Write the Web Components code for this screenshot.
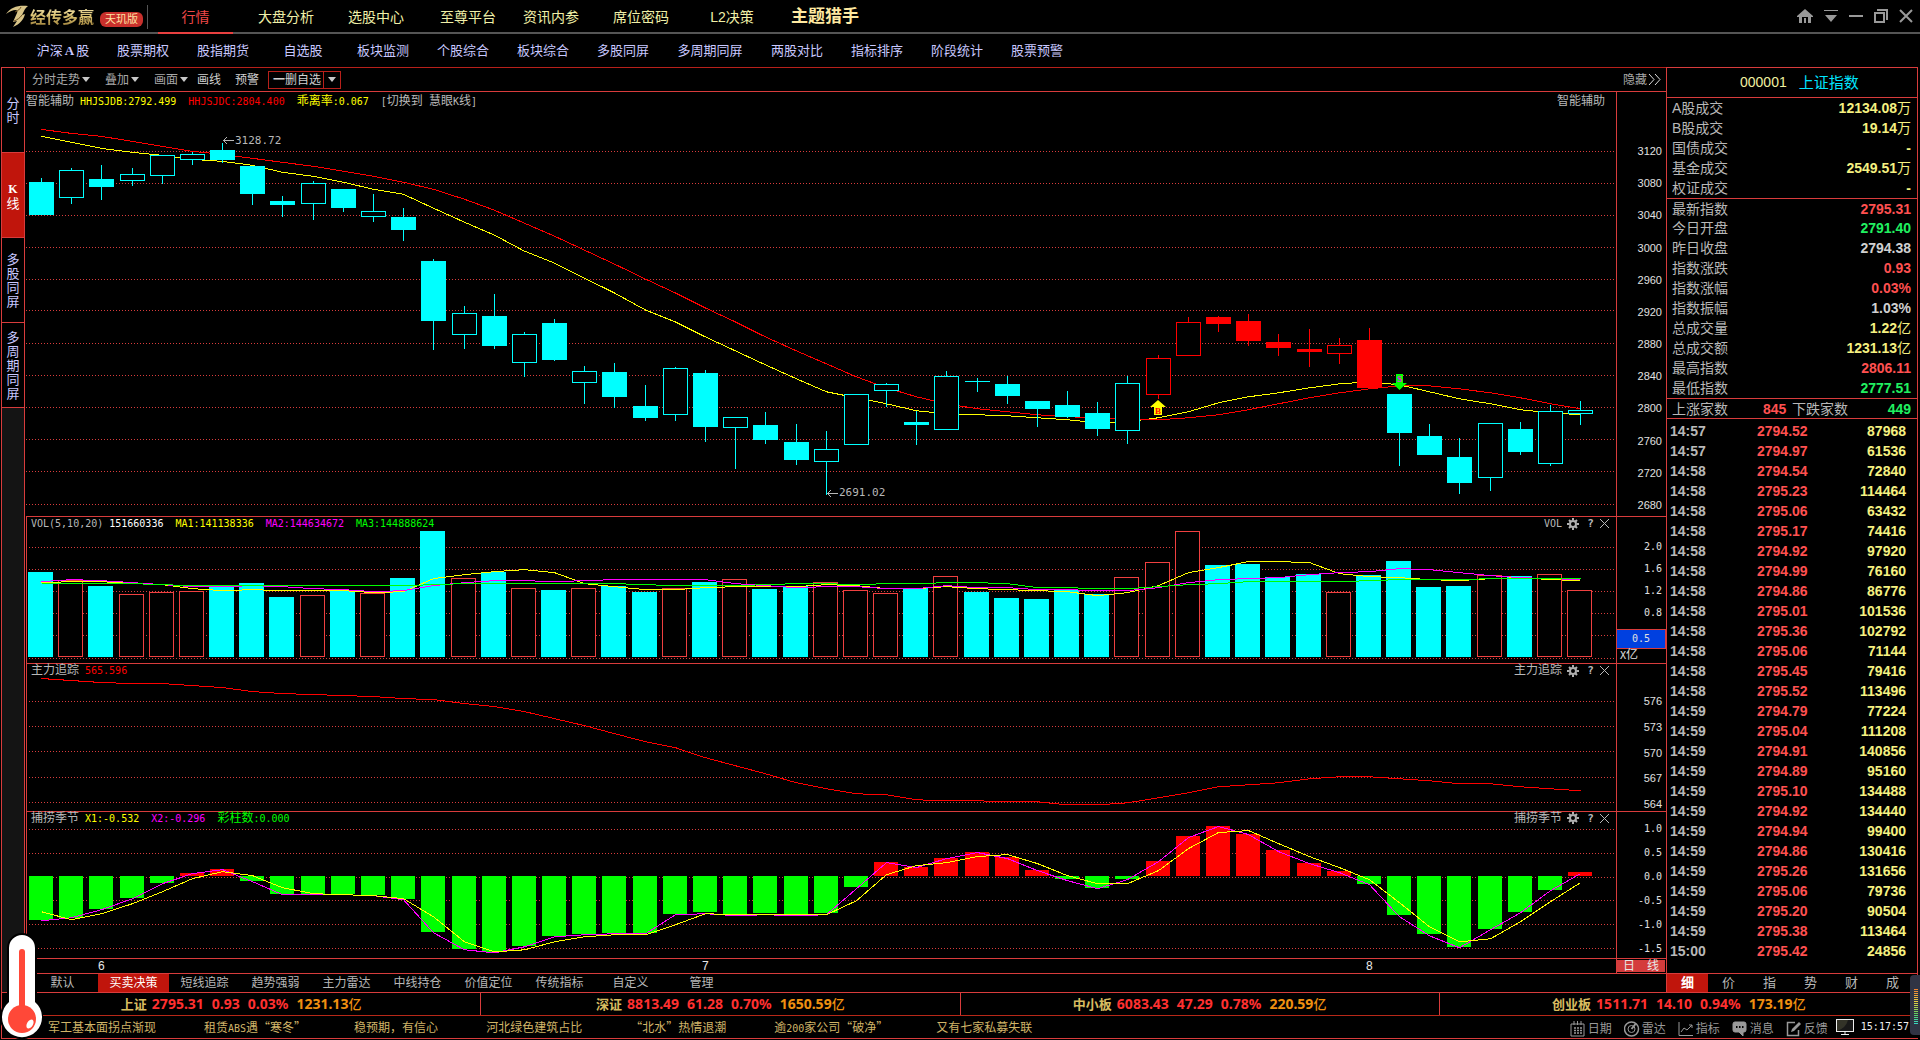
<!DOCTYPE html>
<html lang="zh-CN">
<head>
<meta charset="utf-8">
<title>上证指数 000001</title>
<style>
html,body{margin:0;height:100%;background:#000}
body{overflow:hidden;font-family:"Liberation Sans","Noto Sans CJK SC",sans-serif;font-size:12px;color:#b8b8b8}
</style>
</head>
<body>
<app-shell>
  <top-bar slot="top"></top-bar>
  <sub-nav slot="top"></sub-nav>
  <side-tabs slot="side"></side-tabs>
  <tool-bar slot="main"></tool-bar>
  <chart-panel slot="main" kind="candle" class="big"></chart-panel>
  <chart-panel slot="main" kind="vol"></chart-panel>
  <chart-panel slot="main" kind="force"></chart-panel>
  <chart-panel slot="main" kind="fish"></chart-panel>
  <time-axis slot="main"></time-axis>
  <template-tabs slot="main"></template-tabs>
  <quote-panel slot="quote"></quote-panel>
  <index-bar slot="bottom"></index-bar>
  <news-bar slot="bottom"></news-bar>
  <thermo-meter slot="float"></thermo-meter>
  <level-meter slot="float"></level-meter>
</app-shell>
<script>
const RED = '#d83c3c';
const COMMON = `
*,:host{box-sizing:border-box}
:host{display:block}
button,a{font:inherit;color:inherit;background:none;border:0;padding:0;margin:0;text-decoration:none;cursor:pointer;white-space:nowrap}
i{font:normal 10px "DejaVu Sans Mono",monospace}
svg{display:block}
`;
const mono = s => s.replace(/[\x20-\x7e]+/g, '<i>$&</i>');
function define(name, css, html) {
  customElements.define(name, class extends HTMLElement {
    constructor() {
      super();
      this.attachShadow({mode: 'open'}).innerHTML =
        `<style>${COMMON}${css}</style>${html}`;
    }
  });
}

/* Page frame */
define('app-shell', `
:host{display:flex;flex-direction:column;height:100vh;padding-bottom:1px;position:relative}
.work{flex:1;min-height:0;display:flex;padding:0 2px 0 1px}
.main{flex:1;min-width:0;display:flex;flex-direction:column;margin-left:1px}
::slotted(chart-panel){flex:147 1 0;min-height:0}
::slotted(chart-panel.big){flex:426 1 0}
`, `<slot name="top"></slot>
<div class="work"><slot name="side"></slot><div class="main"><slot name="main"></slot></div><slot name="quote"></slot></div>
<slot name="bottom"></slot><slot name="float"></slot>`);

/* Title bar */
const navs = [['行情',75],['大盘分析',106],['选股中心',74],['至尊平台',110],['资讯内参',54],['席位密码',128],['L2决策',54],['主题猎手',132]];
define('top-bar', `
:host{display:flex;align-items:stretch;height:34px;border-bottom:2px solid #555;color:#f0f0a8}
.logo{display:flex;align-items:center;width:147px;padding-left:5px;gap:1px}
.logo b{font-size:16px;line-height:24px;background:linear-gradient(#fff6d0,#d8c070 50%,#8a6a28);-webkit-background-clip:text;color:transparent;padding-top:4px}
.tag{background:#c8302c;color:#ffe0a0;border-radius:6px;font-size:11px;line-height:15px;height:15px;padding:0 5px;margin:6px 0 0 5px;white-space:nowrap}
.sep{width:1px;background:#555;margin:5px 10px 3px 0}
nav{display:flex;flex:1}
nav a{display:block;text-align:center;font-size:14px;line-height:34px;height:34px}
nav a.on{color:#f04848;border-bottom:2px solid #e84040}
nav a.hot{font-size:17px;font-weight:bold;color:#ffe9a0}
.win{display:flex;align-items:center;gap:11px;padding-right:7px}
`, `<div class="logo">
<svg width="24" height="24" viewBox="0 0 24 24"><path d="M1 10C6 3 13 1 23 2c-3 2-4 5-6 9l3-1c-1 5-5 10-12 13l4-6-4 1 4-9C14 5 8 5 1 10z" fill="#d8c488"/><path d="M10 8c3-1 5-3 6-5M9 17c3-1 6-3 8-6" stroke="#6b5020" fill="none"/></svg>
<b>经传多赢</b><span class="tag">天玑版</span></div><div class="sep"></div>
<nav>${navs.map(([t,w],i)=>`<a href="#" class="${i==0?'on':i==7?'hot':''}" style="width:${w}px">${t}</a>`).join('')}</nav>
<div class="win">
<button aria-label="主页"><svg width="16" height="14" viewBox="0 0 16 14" fill="#999"><path d="M8 0l8 7v1h-2v6h-3V8H5v6H2V8H0V7zM7 9h2v5H7z"/></svg></button>
<button aria-label="菜单"><svg width="14" height="14" viewBox="0 0 14 14" fill="#999"><path d="M0 1h14v1H0zM1 6h12l-6 7z"/></svg></button>
<button aria-label="最小化"><svg width="14" height="14" viewBox="0 0 14 14" fill="#999"><path d="M0 6h14v2H0z"/></svg></button>
<button aria-label="还原"><svg width="14" height="14" viewBox="0 0 14 14" fill="none" stroke="#999"><rect x="1" y="4" width="9" height="9" stroke-width="2"/><path d="M4 2V1h9v9h-1" stroke-width="2"/></svg></button>
<button aria-label="关闭"><svg width="14" height="14" viewBox="0 0 14 14" stroke="#999" stroke-width="2"><path d="M1 1l12 12M13 1L1 13"/></svg></button>
</div>`);

define('sub-nav', `
:host{display:flex;height:33px;padding-left:23px;color:#c8c8ff;font-size:13px;line-height:33px}
a{width:80px;text-align:center}
a.wide{width:94px}
b{font-family:"Liberation Serif";padding:0 2px}
`, ['沪深<b>A</b>股','股票期权','股指期货','自选股','板块监测','个股综合','板块综合','多股同屏','多周期同屏','两股对比','指标排序','阶段统计','股票预警']
  .map(t=>`<a href="#" class="${t==='多周期同屏'?'wide':''}">${t}</a>`).join(''));

define('side-tabs', `
:host{display:flex;flex-direction:column;width:24px;background:#141414;border:1px solid ${RED};border-bottom:0;color:#c8c8ff}
button{height:85px;border-bottom:1px solid ${RED};background:#000;display:flex;align-items:center;justify-content:center}
button.on{background:#c0150c;color:#fff}
span{width:14px;font:13px/14px "Noto Sans CJK SC",sans-serif;white-space:normal;word-break:break-all;text-align:center}
b{font-family:"Liberation Serif";font-size:12px}
`, ['分时','<b>K</b>线','多股同屏','多周期同屏'].map((t,i)=>`<button class="${i==1?'on':''}"><span>${t}</span></button>`).join(''));

const caret = '<svg width="8" height="5" viewBox="0 0 8 5"><path d="M0 0h8L4 5z" fill="#c8c8c8"/></svg>';
define('tool-bar', `
:host{display:flex;align-items:center;height:24px;border-top:1px solid #b8201a;padding:0 5px 0 6px;gap:9px;line-height:16px}
.a{display:flex;gap:15px}
.b{display:flex;gap:14px;color:#d0d0d0}
.a button{display:flex;align-items:center;gap:2px;color:#a8a8a8}
.box{display:flex;border:1px solid #b8201a;height:18px;color:#d0d0d0}
.box button{padding:0 2px 0 4px}
.box button+button{border-left:1px solid #b8201a;padding:0 4px}
.hide{margin-left:auto;display:flex;align-items:center;gap:1px;color:#a8a8a8}
`, `<div class="a">${['分时走势','叠加','画面'].map(t=>`<button>${t}${caret}</button>`).join('')}</div>
<div class="b"><button>画线</button><button>预警</button></div>
<div class="box"><button><b>一</b>删自选</button><button aria-label="更多">${caret}</button></div>
<button class="hide">隐藏<svg width="13" height="11" viewBox="0 0 13 11" fill="none" stroke="#ddd"><path d="M1 0l5 5.500-5 5.500M7 0l5 5.500-5 5.500"/></svg></button>`);

/* Chart data: vertical positions share one drawing space (92 to 957) */
const X = i => Math.round(41 + i * 30.18);
const candles = `f178,182,215,215 h168,170,198,204 f165,179,187,200 h168,174,181,186 h155,155,176,184 h152,154,160,165 f143,150,160,163 f166,166,194,205 f196,201,205,217 h181,183,204,220 f189,189,208,212 h194,211,217,222 f208,217,230,241 f259,261,322,351 h306,314,336,350 f294,317,347,350 h333,335,364,378 f320,324,361,362 h367,372,384,405 f364,373,398,409 f386,407,419,422 h368,369,416,422 f371,374,428,443 h418,418,429,470 f413,426,441,445 f425,443,461,466 h432,450,463,496 h395,395,446,446 h384,385,392,408 f412,423,426,446 h372,377,431,431 f379,382,383,393 f377,385,397,405 f402,402,410,428 f392,406,418,419 f403,414,430,437 h377,384,432,445 H356,359,396,400 H318,323,357,357 F317,318,325,333 F315,322,342,347 F335,343,349,357 F330,350,353,368 H339,346,355,365 F329,341,389,389 f395,395,434,467 f425,437,456,456 f439,458,484,495 h424,424,479,492 f423,430,453,456 h406,412,465,467 h402,411,415,426`.split(' ');
const maY = [136,142,148,152,155,159,161,165,172,176,182,189,194,208,222,235,251,263,278,293,310,322,337,351,365,379,392,398,404,411,414,415,416,418,420,423,422,418,412,403,397,393,388,384,382,385,392,399,404,410,413,415];
const maR = [129,133,136,141,146,151,154,158,162,166,171,176,182,189,199,210,223,236,250,264,279,293,308,322,337,351,364,377,388,397,404,409,412,415,417,418,420,420,418,415,410,404,398,393,389,386,386,389,393,398,404,409];
const vols = 'f573 h581 f587 h595 h593 h592 f588 f584 f598 h596 f592 h594 f579 f532 h579 f573 h589 f591 h589 f587 f593 h589 f583 h580 f590 f587 h583 h591 h594 f589 h577 f593 f599 f600 f591 f595 h578 h563 h532 f566 f565 f578 f575 h593 f576 f562 f588 f587 h576 f577 h575 h591'.split(' ');
const v1 = [583,582,582,584,585,589,591,590,591,591,591,593,592,579,575,572,570,573,584,587,590,590,588,587,587,587,585,586,589,589,587,589,590,591,592,596,593,586,573,568,562,562,563,574,577,578,580,581,579,578,580,581];
const v2 = [582,580,581,583,585,587,587,586,587,589,590,592,591,586,583,581,581,582,581,580,580,580,580,584,586,588,587,587,589,589,586,588,588,590,590,591,591,588,583,580,579,578,575,573,572,569,570,573,576,578,579,580];
const v3 = [584,584,584,584,585,586,586,586,586,586,586,586,586,585,584,584,584,584,584,584,585,586,586,586,585,584,584,585,584,584,583,583,584,588,588,589,589,587,585,584,582,582,582,582,581,580,580,580,579,579,579,579];
const force = [679,681,683,684,684,686,688,692,694,695,696,697,699,700,704,707,712,719,726,734,742,748,758,766,774,783,789,794,795,800,801,801,802,802,805,805,803,798,793,787,785,783,779,777,777,779,781,784,784,787,789,791];
const fish = [920,918,909,898,883,873,869,881,894,894,894,895,899,932,949,952,946,936,934,933,933,914,912,914,913,914,913,887,862,867,858,852,857,870,879,888,879,861,836,826,834,850,863,871,884,915,934,947,929,912,890,872];
const fM = [920,917,909,898,883,873,869,881,894,894,894,895,899,932,949,952,946,936,934,933,933,914,913,915,914,915,914,888,862,867,858,852,858,870,880,888,879,861,837,826,834,851,863,872,884,916,935,947,929,912,890,873];
const fY = [911,919,913,903,891,878,871,875,887,893,894,895,898,916,941,951,949,941,936,934,934,924,913,914,914,914,914,900,874,865,862,856,854,863,875,883,883,870,848,832,830,843,856,867,879,902,926,941,938,921,901,882];
const CY = '#0ff';
const line = (a, c) => `<polyline fill="none" stroke="${c}" vector-effect="non-scaling-stroke" points="${a.map((y,i)=>X(i)+.5+','+(y+.5)).join(' ')}"/>`;
const grid = (ys, x0) => ys.map(y=>`<path d="M${x0} ${y}.5H1614" stroke="${RED}" stroke-dasharray="1 2" vector-effect="non-scaling-stroke"/>`).join('');
const box = (x, y, w, h, fill, stroke) => stroke
  ? `<rect x="${x+.5}" y="${y+.5}" width="${w-1}" height="${Math.max(h-1,1)}" fill="#000" stroke="${stroke}" vector-effect="non-scaling-stroke"/>`
  : `<rect x="${x}" y="${y}" width="${w}" height="${h}" fill="${fill}"/>`;

const charts = {
  candle: {
    top: 92, h: 425, left: 26, title: '智能辅助',
    legend: [['智能辅助','#b8b8b8'],['HHJSJDB:2792.499','#ff0'],['HHJSJDC:2804.400','#f00'],['乖离率:0.067','#ff0'],['[切换到 慧眼K线]','#b8b8b8']],
    svg: () => grid([151,183,215,247,279,311,344,376,408,440,472,505],26) + line(maY,'#ff0') + line(maR,'#f00') +
      candles.map((c,i)=>{
        const [h,t,b,l] = c.slice(1).split(',').map(Number), k = c[0];
        const col = k==='f'||k==='h' ? CY : '#f00', solid = k==='f'||k==='F', x = X(i);
        return `<rect x="${x}" y="${h}" width="1" height="${l-h}" fill="${col}"/>` + box(x-12,t,25,Math.max(b-t,1),col,solid?'':col);
      }).join(''),
    notes: [
      [223,134,'<svg width="11" height="7" viewBox="0 0 11 7" stroke="#b8b8b8" fill="none"><path d="M0 3.500h11M4 0L.5 3.500 4 7"/></svg><em>3128.72</em>'],
      [827,487,'<svg width="11" height="7" viewBox="0 0 11 7" stroke="#b8b8b8" fill="none"><path d="M0 3.500h11M4 0L.5 3.500 4 7"/></svg><em>2691.02</em>'],
      [1150,401,'<svg width="16" height="15" viewBox="0 0 16 15"><path d="M8 0l8 7h-4v8H4V7H0z" fill="#ff0"/><text x="5" y="14" font-size="9" font-weight="bold" font-family="Liberation Serif" fill="#f00">B</text></svg>'],
      [1392,375,'<svg width="15" height="16" viewBox="0 0 15 16"><path d="M4 0h7v9h4l-7.500 7L0 9h4z" fill="#0f0"/><text x="5" y="8" font-size="9" font-weight="bold" font-family="Liberation Serif" fill="#f0f">S</text></svg>']],
    axis: '<div class="col" style="padding:53px 0 5px">' + [3120,3080,3040,3000,2960,2920,2880,2840,2800,2760,2720,2680].map(v=>`<span class="n">${v}</span>`).join('') + '</div>'
  },
  vol: {
    top: 518, h: 146, left: 27, title: 'VOL', tools: 1,
    legend: [['VOL(5,10,20)','#b8b8b8'],['151660336','#fff'],['MA1:141138336','#ff0'],['MA2:144634672','#f0f'],['MA3:144888624','#0f0']],
    svg: () => grid([548,570,592,614,636,659],29) +
      vols.map((v,i)=>{const y=+v.slice(1); return box(X(i)-13,y,25,658-y,CY,v[0]==='h'?'#f04040':'');}).join('') +
      line(v1,'#ff0') + line(v2,'#f0f') + line(v3,'#0f0'),
    axis: '<div class="col" style="padding-top:24px;height:102px">' + ['2.0','1.6','1.2','0.8'].map(v=>`<i>${v}</i>`).join('') + '</div><div class="blue"><i>0.5</i></div><div class="unit"><i>X</i>亿</div>'
  },
  force: {
    top: 665, h: 146, left: 27, title: '主力追踪', tools: 1,
    legend: [['主力追踪','#b8b8b8'],['565.596','#f00']],
    svg: () => grid([702,727,752,778,803],29) + line(force,'#f00'),
    axis: '<div class="col" style="padding:31px 0 1px">' + [576,573,570,567,564].map(v=>`<span class="n">${v}</span>`).join('') + '</div>'
  },
  fish: {
    top: 812, h: 146, left: 27, title: '捕捞季节', tools: 1,
    legend: [['捕捞季节','#b8b8b8'],['X1:-0.532','#ff0'],['X2:-0.296','#f0f'],['彩柱数:0.000','#0f0']],
    svg: () => grid([829,853,877,900,924,948],29) +
      fish.map((y,i)=> y<876 ? box(X(i)-12,y,24,876-y,'#f00') : box(X(i)-12,876,24,y-876,'#0f0')).join('') +
      line(fM,'#f0f') + line(fY,'#ff0'),
    axis: '<div class="col" style="padding:11px 0 3px">' + ['1.0','0.5','0.0','-0.5','-1.0','-1.5'].map(v=>`<i>${v}</i>`).join('') + '</div>'
  }
};
const gear = '<svg width="12" height="12" viewBox="0 0 12 12" fill="none" stroke="#b0b0b0"><circle cx="6" cy="6" r="3" stroke-width="2"/><path stroke-width="2" d="M6 0v2M6 10v2M0 6h2M10 6h2M2 2l1.500 1.500M8.500 8.500L10 10M10 2L8.500 3.500M3.500 8.500L2 10"/></svg>';
customElements.define('chart-panel', class extends HTMLElement {
  connectedCallback() {
    if (this.shadowRoot) return;
    const d = charts[this.getAttribute('kind')];
    const pc = (v, o, t) => ((v - o) / t * 100).toFixed(3) + '%';
    const w = 1616 - d.left;
    this.attachShadow({mode: 'open'}).innerHTML = `<style>${COMMON}
:host{display:flex;border-top:1px solid ${RED};font-size:12px}
.plot{flex:1;min-width:0;display:grid;grid-template:minmax(0,1fr)/minmax(0,1fr);position:relative;${d.tools?`border-left:1px solid ${RED}`:''}}
.plot>svg{grid-area:1/1;width:100%;height:100%;shape-rendering:crispEdges}
header{grid-area:1/1;display:flex;align-items:center;height:${d.tools?13:18}px;line-height:13px;padding:0 ${d.tools?7:11}px 0 ${d.tools?4:0}px;white-space:nowrap;z-index:1}
header span{margin-right:12px}
header span:first-child{margin-right:6px}
.t{margin-left:auto;display:flex;align-items:center}
.t svg{margin-left:5px}
.t b{display:block;font:bold 11px/13px "DejaVu Sans Mono";width:7px;margin-left:8px}
.t .x{margin-left:6px}
.t .x svg{margin:0}
.note{position:absolute;display:flex;align-items:center;gap:1px}
em{font:normal 11px/14px "DejaVu Sans Mono"}
.axis{width:50px;border-left:1px solid ${RED};color:#e0e0e0;display:flex;flex-direction:column}
.col{flex:1;display:flex;flex-direction:column;justify-content:space-between;align-items:flex-end}
.col>*{line-height:12px;margin-right:4px}
.n{font-size:11px}
.col[style*=height]{flex:none}
.blue{margin-top:10px;height:20px;background:#0040e0;border:1px solid ${RED};border-left:0;text-align:center;line-height:17px}
.unit{line-height:13px;padding-left:3px}
</style>
<div class="plot"><svg viewBox="${d.left} ${d.top} ${w} ${d.h}" preserveAspectRatio="none" aria-hidden="true">${d.svg()}</svg>
<header>${d.legend.map(([t,c])=>`<span style="color:${c}">${mono(t)}</span>`).join('')}
<div class="t">${mono(d.title)}${d.tools?`<button aria-label="设置">${gear}</button><button aria-label="说明"><b>?</b></button><button class="x" aria-label="关闭"><svg width="9" height="9" viewBox="0 0 9 9" stroke="#b8b8b8"><path d="M0 0l9 9M9 0L0 9"/></svg></button>`:''}</div></header>
${(d.notes||[]).map(([x,y,h])=>`<div class="note" style="left:${pc(x,d.left,w)};top:${pc(y,d.top,d.h)}">${h}</div>`).join('')}
</div><div class="axis">${d.axis}</div>`;
  }
});

define('time-axis', `
:host{display:flex;height:15px;border-top:1px solid ${RED};border-left:1px solid ${RED};line-height:14px;color:#e8e8e8}
.m{flex:1;display:grid;grid-template-columns:604fr 664fr 250fr;padding-left:71px}
.p{width:50px;border-left:1px solid ${RED};padding:1px 1px 1px 0}
.p span{display:block;height:12px;background:#d43c3c;line-height:12px;text-align:center}
`, `<div class="m"><span>6</span><span>7</span><span>8</span></div><div class="p"><span>日&emsp;线</span></div>`);

define('template-tabs', `
:host{display:flex;height:19px;border-top:1px solid ${RED};border-left:1px solid ${RED};line-height:18px;color:#b8b8b8}
button{width:71px}
.on{background:#c0150c;color:#fff}
`, ['默认','买卖决策','短线追踪','趋势强弱','主力雷达','中线持仓','价值定位','传统指标','自定义','管理'].map((t,i)=>`<button class="${i==1?'on':''}">${t}</button>`).join(''));

/* Quote panel */
const rows1 = [['A股成交','12134.08万','y'],['B股成交','19.14万','y'],['国债成交','-','y'],['基金成交','2549.51万','y'],['权证成交','-','y']];
const rows2 = [['最新指数','2795.31','r'],['今日开盘','2791.40','g'],['昨日收盘','2794.38','w'],['指数涨跌','0.93','r'],['指数涨幅','0.03%','r'],['指数振幅','1.03%','w'],['总成交量','1.22亿','y'],['总成交额','1231.13亿','y'],['最高指数','2806.11','r'],['最低指数','2777.51','g']];
const ticks = `14:57 2794.52 87968,14:57 2794.97 61536,14:58 2794.54 72840,14:58 2795.23 114464,14:58 2795.06 63432,14:58 2795.17 74416,14:58 2794.92 97920,14:58 2794.99 76160,14:58 2794.86 86776,14:58 2795.01 101536,14:58 2795.36 102792,14:58 2795.06 71144,14:58 2795.45 79416,14:58 2795.52 113496,14:59 2794.79 77224,14:59 2795.04 111208,14:59 2794.91 140856,14:59 2794.89 95160,14:59 2795.10 134488,14:59 2794.92 134440,14:59 2794.94 99400,14:59 2794.86 130416,14:59 2795.26 131656,14:59 2795.06 79736,14:59 2795.20 90504,14:59 2795.38 113464,15:00 2795.42 24856`.split(',').map(r=>r.split(' '));
const num = s => s.replace(/[万亿]/, '<u>$&</u>');
const tbl = r => `<table>${r.map(([a,b,c])=>`<tr><th scope="row">${a}</th><td class="${c}">${num(b)}</td></tr>`).join('')}</table>`;
define('quote-panel', `
:host{display:flex;flex-direction:column;width:252px;border:1px solid ${RED};border-bottom:0;font-size:14px}
h2{margin:0;height:29px;font-weight:normal;font-size:14px;line-height:29px;display:flex;padding-left:73px;gap:12px;color:#f0f0a0}
h2 span+span{color:#00e5ff;font-size:15px}
table{width:100%;border-spacing:0;border-collapse:separate}
th,td{padding:0;height:20px;line-height:19px;white-space:nowrap}
th{font-weight:normal;text-align:left;padding-left:5px;color:#b8b8b8}
td{text-align:right;font-weight:bold;padding-right:6px}
u{text-decoration:none;font-weight:normal}
.s{border-top:1px solid ${RED}}
.s.c tr:first-child>*{height:19px;line-height:18px}
.r{color:#ff5050}.g{color:#20f060}.y{color:#f5f080}.w{color:#d0d0d0}
.ud th:first-child{width:96px}
.ud .r{width:24px;padding:0;text-align:left}
.k{padding-top:2px;flex:1;min-height:0}
.k th{font-weight:bold;padding-left:3px;width:90px}
.k td{text-align:left}
.k td+td{text-align:right;padding-right:11px}
.tabs{display:flex;border-top:1px solid ${RED};height:19px}
.tabs button{width:41px;line-height:18px;font-size:13px}
.tabs .on{background:#c0150c;color:#fff;font-weight:bold}
`, `<h2><span>000001</span><span>上证指数</span></h2>
<div class="s">${tbl(rows1)}</div><div class="s c">${tbl(rows2)}</div>
<div class="s c ud"><table><tr><th scope="row">上涨家数</th><td class="r">845</td><th scope="row">下跌家数</th><td class="g">449</td></tr></table></div>
<div class="s k"><table>${ticks.map(([a,b,c])=>`<tr><th scope="row">${a}</th><td class="r">${b}</td><td class="y">${c}</td></tr>`).join('')}</table></div>
<div class="tabs">${[...'细价指势财成'].map((t,i)=>`<button class="${i==0?'on':''}">${t}</button>`).join('')}</div>`);

const idx = [['上证','2795.31','0.93','0.03%','1231.13亿'],['深证','8813.49','61.28','0.70%','1650.59亿'],['中小板','6083.43','47.29','0.78%','220.59亿'],['创业板','1511.71','14.10','0.94%','173.19亿']];
define('index-bar', `
:host{display:flex;height:23px;border-top:1px solid ${RED};margin:0 2px 0 1px;border-left:1px solid ${RED};font:bold 14px/22px "Noto Sans","Noto Sans CJK SC",sans-serif;color:#ff3030}
a{flex:1;display:flex;justify-content:center;gap:8px}
a+a{border-left:1px solid ${RED}}
span:first-child{color:#d8bc60;font-size:13px;margin-right:-3px}
span:last-child{color:#f09010}
u{text-decoration:none;font-weight:500;font-size:13px}
`, idx.map(r=>`<a href="#">${r.map(t=>`<span>${num(t)}</span>`).join('')}</a>`).join(''));

const ic = {
 cal:'<path d="M1 3h13v12H1zM4 0v4M7.500 0v4M11 0v4"/><path d="M4 7h2M7 7h2M10 7h2M4 9.500h2M7 9.500h2M10 9.500h2M4 12h2M7 12h2M10 12h2" stroke-width="1.500"/>',
 rad:'<circle cx="7.500" cy="8" r="7" stroke-width="1.500"/><circle cx="7.500" cy="8" r="3.500"/><path d="M7.500 8l4-5" stroke-width="2"/>',
 chart:'<path d="M1 1v13.500h14M3 11l3-4 3 2 5-5M11 4h3v3"/>',
 msg:'<path d="M1 3q0-2 2-2h9q2 0 2 2v6q0 2-2 2h-1v4l-4-4H3q-2 0-2-2z" fill="#999"/><path d="M4 6h1.500M7 6h1.500M10 6h1.500" stroke="#000" stroke-width="2"/>',
 edit:'<path d="M9 1.500H1.500v13h11V9" stroke-width="1.500"/><path d="M5 11l1-3 7-7 2 2-7 7z" fill="#999" stroke="none"/>'
};
define('news-bar', `
:host{display:flex;align-items:center;height:24px;border:1px solid ${RED};border-width:1px 0 1px 1px;border-top-color:#b82818;margin:0 2px 0 1px;padding-left:46px;color:#d0b468}
.n{display:flex;gap:48px;flex:1;line-height:22px;font-family:"Noto Sans CJK SC",sans-serif}
.s{display:flex;align-items:center;gap:12px;color:#999;line-height:20px;padding-top:3px}
.s button{display:flex;align-items:center;gap:2px}
.pc{margin-left:8px}
time{font:10px/22px "DejaVu Sans Mono",monospace;color:#f0f0f0;padding:0 9px 0 7px}
`, `<div class="n">${['军工基本面拐点渐现','租赁ABS遇“寒冬”','稳预期，有信心','河北绿色建筑占比','“北水”热情退潮','逾200家公司“破净”','又有七家私募失联'].map(t=>`<a href="#">${mono(t)}</a>`).join('')}</div>
<div class="s">${[['cal','日期'],['rad','雷达'],['chart','指标'],['msg','消息'],['edit','反馈']].map(([k,t])=>`<button><svg width="16" height="16" viewBox="0 0 16 16" fill="none" stroke="#999">${ic[k]}</svg>${t}</button>`).join('')}</div>
<svg class="pc" width="18" height="16" viewBox="0 0 18 16"><rect x=".5" y=".5" width="17" height="12" fill="#181818" stroke="#eee"/><path d="M1 12V1h11q-2 8-11 11z" fill="#333328"/><path d="M9 13v2M5 15.500h8" stroke="#eee"/></svg>
<time>15:17:57</time>`);

define('thermo-meter', `
:host{position:absolute;left:1px;bottom:0;width:42px;height:108px}
`, `<svg width="42" height="108" viewBox="0 0 42 108"><path d="M8 16a13 13 0 0 1 26 0v54a20 20 0 1 1-26 0z" fill="#fff" stroke="#000" stroke-width="4" paint-order="stroke"/><rect x="18" y="17" width="6" height="60" rx="3" fill="#ff4838"/><circle cx="21" cy="87" r="14" fill="#ff4838"/><ellipse cx="29" cy="92" rx="3" ry="5" transform="rotate(30 29 92)" fill="#fff"/></svg>`);
define('level-meter', `
:host{position:absolute;right:0;bottom:5px;width:10px;height:60px;background:#303444;border-radius:4px 0 0 4px;padding:14px 2px 10px 4px}
div{height:36px;background:repeating-linear-gradient(transparent 0 1px,#303444 1px 2px),linear-gradient(#f08030,#e8d040 35%,#60d060 70%,#30d8d0)}
`, `<div></div>`);
</script>
</body>
</html>
